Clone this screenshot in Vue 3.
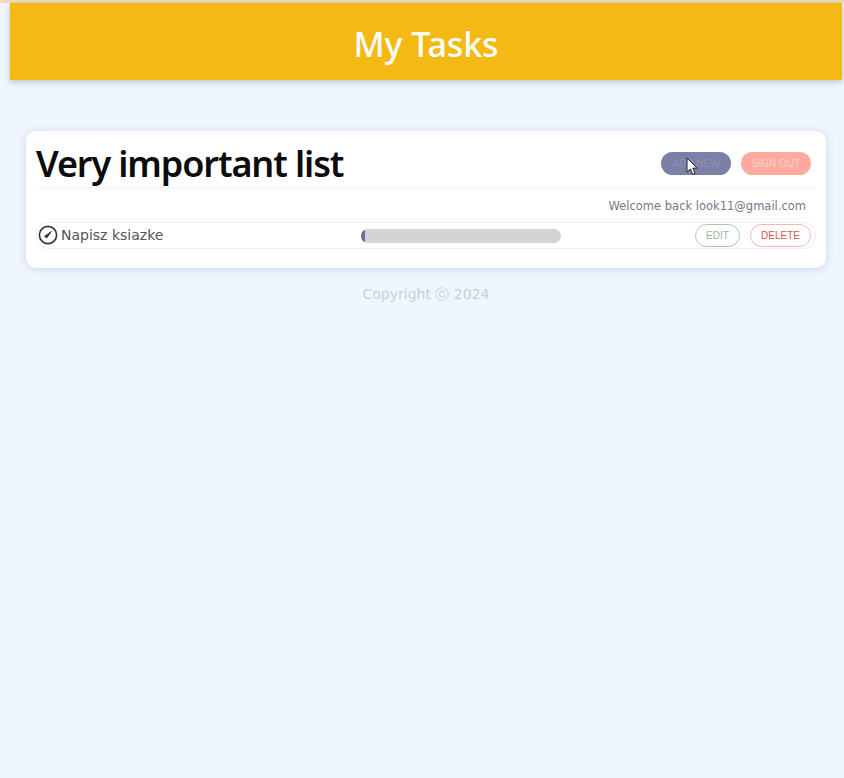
<script setup>
const tasks = [{ id: 1, name: 'Napisz ksiazke', progress: 2 }]
</script>

<template>
  <div class="page">
    <header class="top-bar">
      <h1>My Tasks</h1>
    </header>
    <main class="card">
      <div class="card-head">
        <h2>Very important list</h2>
        <div class="head-actions">
          <button class="pill add-btn">
            ADD NEW
            <svg class="cursor" width="12" height="19" viewBox="0 0 12 19">
              <path d="M1 1v14l3.4-3 2.3 5.4 2.4-1-2.3-5.2H11z" fill="#fff" stroke="#222" stroke-width="1" />
            </svg>
          </button>
          <button class="pill sign-btn">SIGN OUT</button>
        </div>
      </div>
      <p class="welcome">Welcome back look11@gmail.com</p>
      <div class="task" v-for="task in tasks" :key="task.id">
        <div class="task-name">
          <svg class="check" width="20" height="20" viewBox="0 0 20 20">
            <circle cx="10" cy="10" r="8.6" fill="none" stroke="#333" stroke-width="1.6" />
            <path d="M6.6 11.2l2 1.8 4.6-6.4-3.6 2.6z" fill="#333" stroke="#333" stroke-width="1" />
          </svg>
          <span>{{ task.name }}</span>
        </div>
        <div class="bar">
          <div class="bar-fill" :style="{ width: task.progress + '%' }"></div>
        </div>
        <div class="task-actions">
          <button class="outline edit-btn">EDIT</button>
          <button class="outline delete-btn">DELETE</button>
        </div>
      </div>
    </main>
    <footer class="copy">Copyright ⓒ 2024</footer>
  </div>
</template>

<style>
html, body {
  margin: 0;
  background: #eff6fe;
}
</style>

<style scoped>
.page {
  min-height: 778px;
  box-sizing: border-box;
  border-top: 3px solid #f3d9bb;
  padding: 0 2px 0 10px;
  font-family: "DejaVu Sans", sans-serif;
  background: #eff6fe;
}

.top-bar {
  height: 77px;
  padding-top: 4px;
  box-sizing: border-box;
  background: #f5b915;
  box-shadow: 0 2px 6px rgba(60, 70, 90, 0.3);
  display: flex;
  align-items: center;
  justify-content: center;
}

.top-bar h1 {
  margin: 0;
  color: #fff;
  font-family: "Noto Sans", sans-serif;
  font-size: 34px;
  font-weight: 500;
  letter-spacing: -0.1px;
}

.card {
  width: 800px;
  box-sizing: border-box;
  margin: 51px 0 0 16px;
  height: 137px;
  padding: 8px 10px 0;
  background: #fff;
  border-radius: 10px;
  box-shadow: 0 1px 8px rgba(90, 120, 160, 0.25);
}

.card-head {
  height: 48px;
  display: flex;
  align-items: center;
  justify-content: space-between;
  border-bottom: 1px solid #f2f2f2;
}

.card-head h2 {
  margin: 0;
  font-family: "Noto Sans", sans-serif;
  font-size: 36px;
  font-weight: 600;
  letter-spacing: -1.1px;
  color: #0c0c0c;
}

.head-actions {
  display: flex;
  gap: 10px;
  padding-right: 5px;
}

.pill {
  width: 70px;
  height: 23px;
  padding: 0;
  border: none;
  border-radius: 12px;
  font-family: "Liberation Sans", sans-serif;
  font-size: 10px;
  position: relative;
}

.add-btn {
  background: #7c7fa8;
  color: #8f92b6;
}

.sign-btn {
  background: #fcaaa0;
  color: #fdd0ca;
}

.cursor {
  position: absolute;
  left: 25px;
  top: 5px;
}

.welcome {
  margin: 0;
  height: 34px;
  line-height: 36px;
  text-align: right;
  padding-right: 10px;
  font-size: 11.5px;
  color: #77778a;
}

.task {
  height: 27px;
  box-sizing: border-box;
  border: 1px solid #eeeeee;
  border-radius: 12px;
  display: flex;
  align-items: center;
  padding: 0 4px 0 1px;
}

.task-name {
  width: 323px;
  display: flex;
  align-items: center;
  gap: 3px;
  padding-bottom: 2px;
  font-size: 14px;
  color: #555;
}

.bar {
  width: 200px;
  height: 14px;
  background: #d4d4d4;
  border-radius: 7px;
  overflow: hidden;
}

.bar-fill {
  height: 100%;
  background: #6d6d95;
}

.task-actions {
  margin-left: auto;
  display: flex;
  gap: 10px;
}

.outline {
  height: 23px;
  padding: 0;
  background: #fff;
  border-radius: 12px;
  font-family: "Liberation Sans", sans-serif;
  font-size: 10px;
}

.edit-btn {
  width: 45px;
  border: 1px solid #a9c9ab;
  color: #a3b3a4;
}

.delete-btn {
  width: 61px;
  border: 1px solid #f5b5b5;
  color: #d9534f;
}

.copy {
  margin-top: 18px;
  text-align: center;
  font-size: 14px;
  color: #c9ced6;
}
</style>
